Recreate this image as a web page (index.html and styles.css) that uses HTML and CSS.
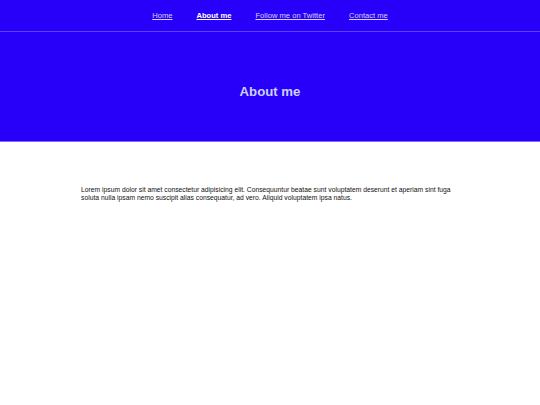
FILE: index.html
```html
<!DOCTYPE html>
<html lang="en">
<head>
<meta charset="utf-8">
<title>About me</title>
<link rel="stylesheet" href="styles.css">
</head>
<body>
<header class="top">
  <nav class="nav">
    <a href="#" class="nav-link">Home</a>
    <a href="#" class="nav-link active">About me</a>
    <a href="#" class="nav-link">Follow me on Twitter</a>
    <a href="#" class="nav-link">Contact me</a>
  </nav>
  <div class="hero">
    <h1 class="hero-title">About me</h1>
  </div>
</header>
<main class="content">
  <p class="text">Lorem ipsum dolor sit amet consectetur adipisicing elit. Consequuntur beatae sunt voluptatem deserunt et aperiam sint fuga soluta nulla ipsam nemo suscipit alias consequatur, ad vero. Aliquid voluptatem ipsa natus.</p>
</main>
</body>
</html>
```

FILE: styles.css
```css
html, body {
  margin: 0;
  padding: 0;
  background: #ffffff;
  font-family: "Liberation Sans", Arial, sans-serif;
}
.top {
  background: #2800fa;
  border-bottom: 1px solid #7d6cff;
}
.nav {
  height: 31px;
  display: flex;
  justify-content: center;
  align-items: center;
  gap: 24px;
  border-bottom: 1px solid #5a44ff;
}
.nav-link {
  color: #d4d0ff;
  font-size: 7.6px;
  text-decoration: underline;
}
.nav-link.active {
  color: #ffffff;
  font-weight: bold;
}
.hero {
  height: 109px;
  display: flex;
  justify-content: center;
  align-items: center;
}
.hero-title {
  margin: 10px 0 0 0;
  color: #ccd2ff;
  font-size: 13.2px;
  font-weight: bold;
}
.content {
  padding: 44px 81px 0 81px;
}
.text {
  margin: 0;
  color: #111111;
  font-size: 6.75px;
  line-height: 8px;
}
```
